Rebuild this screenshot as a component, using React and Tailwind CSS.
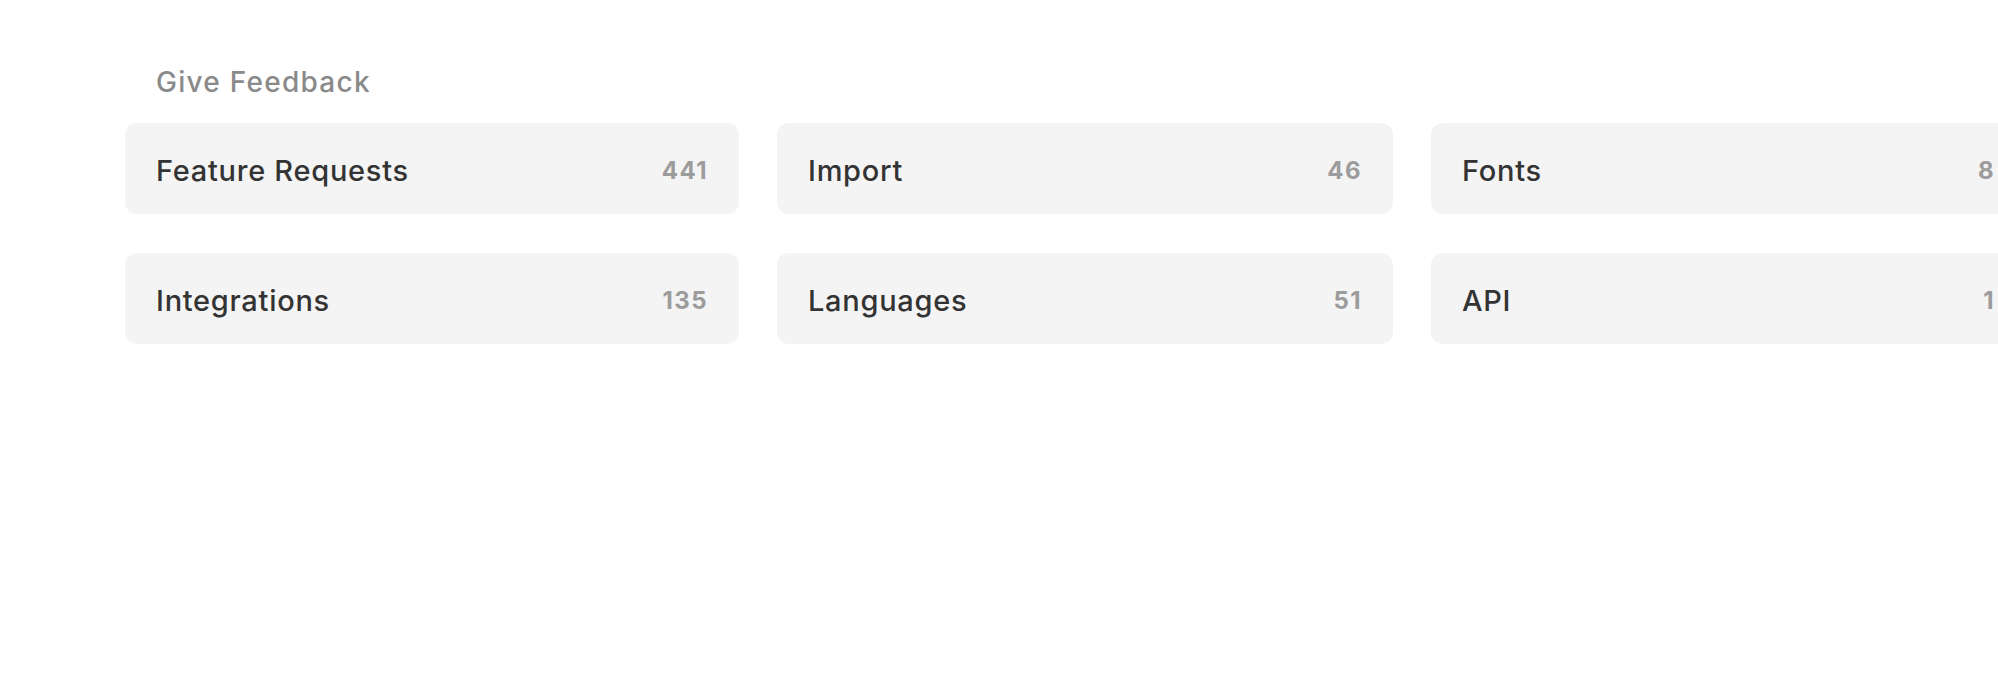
const topics = [
  { name: 'Feature Requests', count: 441 },
  { name: 'Import', count: 46 },
  { name: 'Fonts', count: 8 },
  { name: 'Integrations', count: 135 },
  { name: 'Languages', count: 51 },
  { name: 'API', count: 1 },
]

export default function App() {
  return (
    <div className="min-h-screen bg-white pt-[68px] pl-[125px] overflow-hidden font-['Inter','Noto_Sans',sans-serif]">
      <h2 className="pl-[31px] text-[28px] leading-[28px] font-medium tracking-[0.045em] text-[#8a8a8a]">Give Feedback</h2>
      <div className="mt-[27px] grid grid-cols-[614px_616px_595px] gap-x-[38px] gap-y-[39px] w-max">
        {topics.map(t => (
          <a key={t.name} href="#" className="h-[91px] flex items-center justify-between pt-1 px-[31px] rounded-xl bg-[#f4f4f4]">
            <span className="text-[29px] leading-[28px] font-[550] tracking-[0.025em] text-[#333333]">{t.name}</span>
            <span className="text-[24px] leading-[24px] font-bold tracking-[0.06em] text-[#9c9c9c]">{t.count}</span>
          </a>
        ))}
      </div>
    </div>
  )
}
